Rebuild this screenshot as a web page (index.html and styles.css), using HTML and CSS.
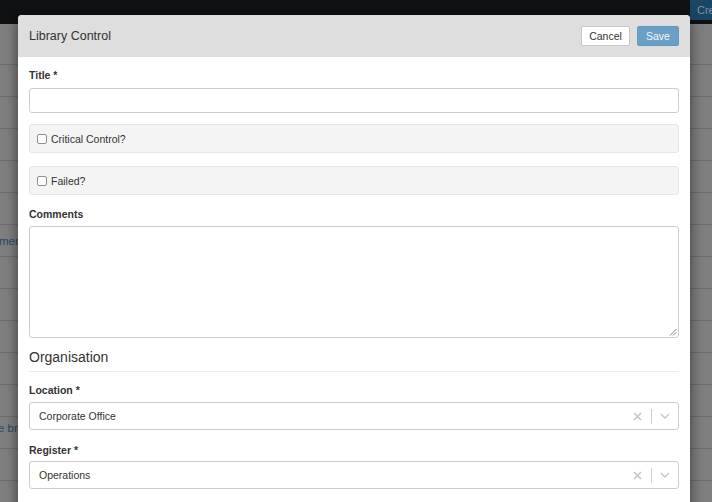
FILE: index.html
```html
<!DOCTYPE html>
<html>
<head>
<meta charset="utf-8">
<link rel="stylesheet" href="styles.css">
</head>
<body>
<div class="page">
  <div class="navbar"><span class="nav-btn">Create</span></div>
  <div class="rows">
    <div class="row row-first"></div>
    <div class="row"></div>
    <div class="row"></div>
    <div class="row"></div>
    <div class="row"></div>
    <div class="row"></div>
    <div class="row"><span class="link">ment</span></div>
    <div class="row"></div>
    <div class="row"></div>
    <div class="row"></div>
    <div class="row"></div>
    <div class="row"></div>
    <div class="row"><span class="link link-b">e brand</span></div>
    <div class="row"></div>
  </div>
</div>

<div class="modal">
  <div class="modal-header">
    <div class="modal-title">Library Control</div>
    <div class="actions">
      <button class="btn btn-cancel">Cancel</button>
      <button class="btn btn-save">Save</button>
    </div>
  </div>
  <div class="modal-body">
    <label class="lbl lbl-title">Title *</label>
    <div class="input"></div>

    <div class="well"><span class="cb"></span><span>Critical Control?</span></div>
    <div class="well"><span class="cb"></span><span>Failed?</span></div>

    <label class="lbl lbl-comments">Comments</label>
    <div class="textarea">
      <svg class="grip" width="8" height="8" viewBox="0 0 8 8"><path d="M1 7.5 L7.5 1 M4 7.5 L7.5 4" stroke="#888" stroke-width="1" fill="none"/></svg>
    </div>

    <div class="section">Organisation</div>

    <label class="lbl lbl-location">Location *</label>
    <div class="select">
      <span class="sel-value">Corporate Office</span>
      <span class="sel-clear"><svg width="9" height="9" viewBox="0 0 9 9"><path d="M1 1 L8 8 M8 1 L1 8" stroke="#c6c6c6" stroke-width="1.6"/></svg></span>
      <span class="sel-sep"></span>
      <span class="sel-arrow"><svg width="10" height="6" viewBox="0 0 10 6"><path d="M1 1 L5 5 L9 1" stroke="#c6c6c6" stroke-width="1.4" fill="none"/></svg></span>
    </div>

    <label class="lbl lbl-register">Register *</label>
    <div class="select">
      <span class="sel-value">Operations</span>
      <span class="sel-clear"><svg width="9" height="9" viewBox="0 0 9 9"><path d="M1 1 L8 8 M8 1 L1 8" stroke="#c6c6c6" stroke-width="1.6"/></svg></span>
      <span class="sel-sep"></span>
      <span class="sel-arrow"><svg width="10" height="6" viewBox="0 0 10 6"><path d="M1 1 L5 5 L9 1" stroke="#c6c6c6" stroke-width="1.4" fill="none"/></svg></span>
    </div>
  </div>
</div>
</body>
</html>
```

FILE: styles.css
```css
* { box-sizing: border-box; }
html, body {
  margin: 0;
  padding: 0;
  width: 712px;
  height: 502px;
  overflow: hidden;
  font-family: "Liberation Sans", Arial, sans-serif;
  background: #7f7f7f;
}
.page { width: 712px; }
.navbar {
  height: 24px;
  background: #0f1113;
  padding-left: 690px;
  white-space: nowrap;
  overflow: hidden;
}
.nav-btn {
  display: inline-block;
  height: 20px;
  line-height: 20px;
  padding: 0 8px 0 7px;
  background: #1b4565;
  color: #7d93a6;
  font-size: 11px;
}
.row {
  height: 32px;
  border-bottom: 1px solid #6d6d6d;
  display: flex;
  align-items: center;
  font-size: 11.5px;
}
.row-first { height: 41px; }
.link { color: #27496a; margin-left: -1px; }
.link-b { margin-left: -2px; margin-bottom: 9px; }

.modal {
  position: absolute;
  left: 18px;
  top: 15px;
  width: 672px;
  height: 520px;
  background: #fff;
  border-radius: 4px 4px 0 0;
  box-shadow: 0 4px 14px rgba(0,0,0,0.55);
  overflow: hidden;
}
.modal-header {
  height: 42px;
  background: #dedede;
  display: flex;
  align-items: center;
  justify-content: space-between;
  padding: 0 11px;
}
.modal-title { font-size: 12.5px; color: #333; }
.actions { display: flex; gap: 7px; }
.btn {
  height: 20px;
  font-family: "Liberation Sans", Arial, sans-serif;
  font-size: 10.5px;
  border-radius: 2px;
  padding: 0;
  line-height: 18px;
}
.btn-cancel {
  width: 49px;
  background: #fff;
  border: 1px solid #c8c8c8;
  color: #333;
}
.btn-save {
  width: 42px;
  background: #6c9fc6;
  border: 1px solid #6399c1;
  color: #f2f6fa;
}
.modal-body { padding: 12px 11px 0; }
.lbl {
  display: block;
  font-size: 10.5px;
  font-weight: bold;
  color: #333;
  line-height: 13px;
}
.lbl-title { margin-bottom: 6px; }
.input {
  height: 25px;
  border: 1px solid #cdcdcd;
  border-radius: 3px;
  margin-bottom: 11px;
}
.well {
  height: 29px;
  background: #f4f4f4;
  border: 1px solid #e6e6e6;
  border-radius: 3px;
  display: flex;
  align-items: center;
  padding-left: 7px;
  font-size: 10.5px;
  color: #333;
  margin-bottom: 13px;
}
.cb {
  width: 10px;
  height: 10px;
  border: 1px solid #8f8f8f;
  border-radius: 2px;
  background: #fff;
  margin-right: 4px;
}
.lbl-comments { margin-bottom: 5px; }
.textarea {
  height: 112px;
  border: 1px solid #cdcdcd;
  border-radius: 3px;
  display: flex;
  justify-content: flex-end;
  align-items: flex-end;
  padding: 0 1px 1px 0;
}
.grip { display: block; }
.section {
  margin-top: 7px;
  font-size: 14px;
  color: #333;
  line-height: 24px;
  padding-bottom: 2px;
  border-bottom: 1px solid #ececec;
}
.lbl-location { margin-top: 12px; margin-bottom: 5px; }
.select {
  height: 28px;
  border: 1px solid #cdcdcd;
  border-radius: 3px;
  display: flex;
  align-items: center;
  padding-left: 9px;
  font-size: 10.5px;
  color: #333;
}
.sel-value { flex: 1; }
.sel-clear { display: flex; width: 17px; justify-content: center; margin-right: 5px; }
.sel-sep { width: 1px; height: 15px; background: #cdcdcd; }
.sel-arrow { display: flex; width: 26px; justify-content: center; }
.lbl-register { margin-top: 14px; margin-bottom: 4px; }
```
